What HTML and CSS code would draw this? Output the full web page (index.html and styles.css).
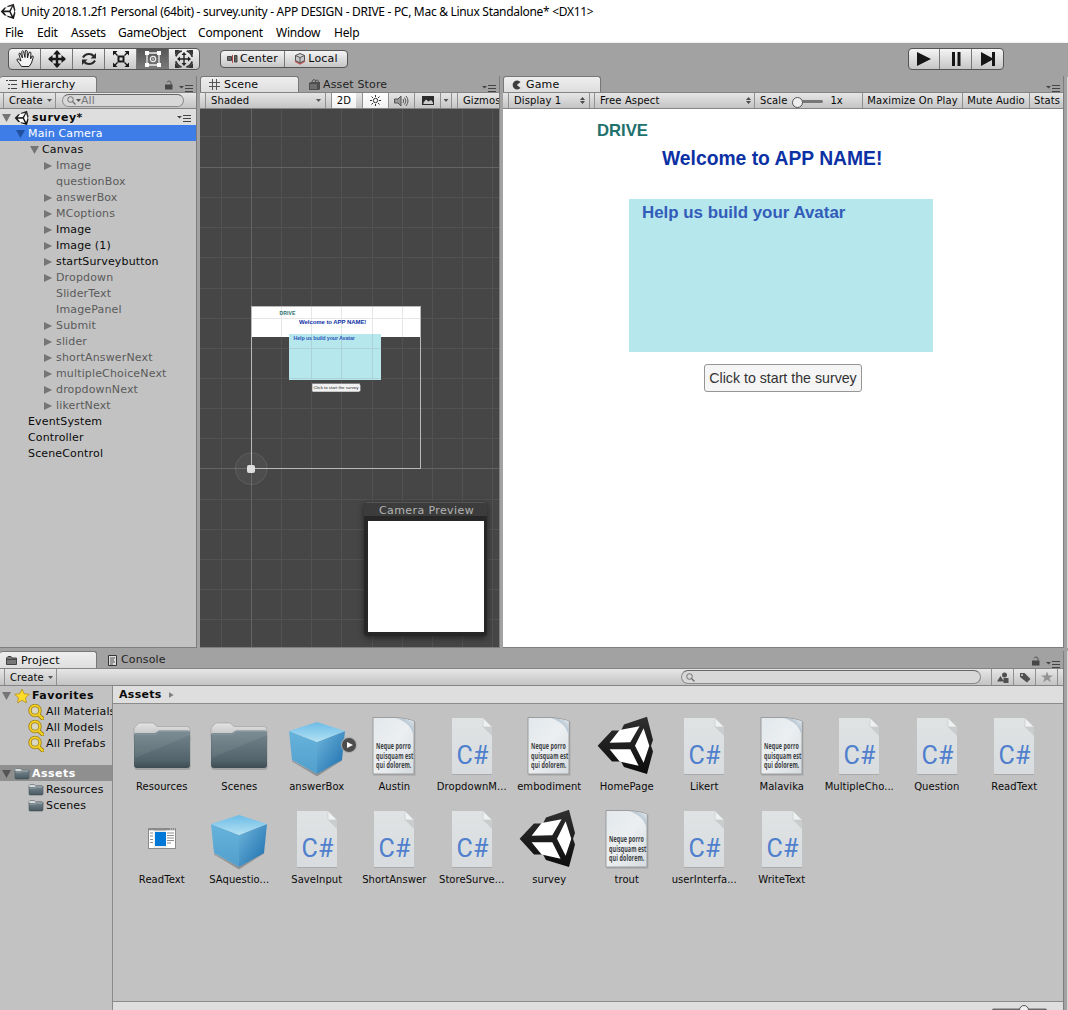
FILE: index.html
```html
<!DOCTYPE html>
<html lang="en">
<head>
<meta charset="utf-8">
<title>Unity 2018.1.2f1 Personal</title>
<link rel="stylesheet" href="styles.css">
</head>
<body>
<svg class="defs" width="0" height="0">
  <defs>
    <linearGradient id="gFolder" x1="0" y1="0" x2="0" y2="1"><stop offset="0" stop-color="#74858d"/><stop offset=".8" stop-color="#52636b"/><stop offset="1" stop-color="#3e4c53"/></linearGradient>
    <linearGradient id="gFlap" x1="0" y1="0" x2="0" y2="1"><stop offset="0" stop-color="#e4e4e4"/><stop offset="1" stop-color="#b4b4b4"/></linearGradient>
    <linearGradient id="gTop" x1="0" y1="0" x2="0" y2="1"><stop offset="0" stop-color="#6cbbe6"/><stop offset="1" stop-color="#b4e2f4"/></linearGradient>
    <linearGradient id="gLeft" x1="0" y1="0" x2="0" y2="1"><stop offset="0" stop-color="#66b3dc"/><stop offset="1" stop-color="#529fcd"/></linearGradient>
    <linearGradient id="gRight" x1="0" y1="0" x2="1" y2="1"><stop offset="0" stop-color="#6fb6dc"/><stop offset=".75" stop-color="#2f7eb8"/><stop offset="1" stop-color="#2a73ab"/></linearGradient>
    <linearGradient id="gDoc" x1="0" y1="0" x2="1" y2="1"><stop offset="0" stop-color="#e2e8ec"/><stop offset=".5" stop-color="#eceff1"/><stop offset="1" stop-color="#d5dbdf"/></linearGradient>
    <linearGradient id="gFold" x1="1" y1="0" x2="0" y2="1"><stop offset="0" stop-color="#e8edf0"/><stop offset=".5" stop-color="#a9bccb"/><stop offset="1" stop-color="#e6eaed"/></linearGradient>
    <linearGradient id="gCs" x1="0" y1="0" x2="0" y2="1"><stop offset="0" stop-color="#dfe3e4"/><stop offset="1" stop-color="#d8dcde"/></linearGradient>
    <linearGradient id="gUnity" x1="0" y1="0" x2="0" y2="1"><stop offset="0" stop-color="#303030"/><stop offset="1" stop-color="#0c0c0c"/></linearGradient>
    <symbol id="folder" viewBox="0 0 64 64">
      <rect x="4.500" y="20" width="56" height="36" rx="3" fill="#8f8f8f" opacity=".6"/>
      <path d="M4 27V15q0-2 2-3l3-3h14l4 3.500h30q3 0 3 3V27z" fill="url(#gFlap)" stroke="#9a9a9a" stroke-width=".6"/>
      <path d="M4 20.500q0-1.500 2-1.500h19l4-2.500h29q2 0 2 2V51q0 3-3 3H7q-3 0-3-3z" fill="url(#gFolder)"/>
      <path d="M5 44L60 21V18.500q0-1.500-2-1.500H29l-4 3H5z" fill="#fff" opacity=".07"/>
      <path d="M5 20h20.500l4-2.800H59" fill="none" stroke="#93a2a9" stroke-width=".8"/>
    </symbol>
    <symbol id="folder-small" viewBox="0 0 16 16">
      <path d="M1 6V3.500L2 2.500h4l1.500 1H14l1 1V6z" fill="#d8dcdd" stroke="#6f7a7e" stroke-width=".8"/>
      <path d="M1 5.500h6l1-.8h7V12q0 1-1 1H2q-1 0-1-1z" fill="url(#gFolder)" stroke="#4b585e" stroke-width=".6"/>
      <path d="M1.500 6h6l1-.8h6" fill="none" stroke="#aeb9bd" stroke-width=".7"/>
    </symbol>
    <symbol id="cube" viewBox="0 0 64 64">
      <path d="M7 47L32 62 57 46l-25 14z" fill="#888" stroke="#999" stroke-width="1"/>
      <path d="M4 17L32 28V60L7 46z" fill="url(#gLeft)"/>
      <path d="M60 17L32 28V60L57 46z" fill="url(#gRight)"/>
      <path d="M32 8L60 17 32 28 4 17z" fill="url(#gTop)"/>
    </symbol>
    <symbol id="cs" viewBox="0 0 64 64">
      <path d="M12 60.500h40" stroke="#aaa" stroke-width="1"/>
      <path d="M12 4H43l9 9V60H12z" fill="url(#gCs)"/>
      <path d="M43 13h9v9z" fill="#c9cdce"/>
      <path d="M43 4l9 9h-9z" fill="#eef0f1" stroke="#c9cdce" stroke-width=".7"/>
      <text x="32.500" y="49.800" text-anchor="middle" textLength="32" lengthAdjust="spacingAndGlyphs" font-family="Roboto, sans-serif" font-size="25" fill="#4f7fcd">C#</text>
    </symbol>
    <symbol id="doc" viewBox="0 0 64 64">
      <path d="M11 4H36L53 7V61H11z" fill="#888" opacity=".35" transform="translate(.5 .8)"/>
      <path d="M11 3.500H34Q44 4 52 7V60H11z" fill="url(#gDoc)" stroke="#8e8e8e" stroke-width=".8"/>
      <path d="M34 4Q44 4.500 51.500 7V21Q49 9 34 4z" fill="url(#gFold)"/>
      <g font-family="'Open Sans', sans-serif" font-weight="700" font-size="8.500" fill="#3b3d3f">
        <text x="14" y="35" textLength="35" lengthAdjust="spacingAndGlyphs">Neque porro</text>
        <text x="14" y="44.500" textLength="37.500" lengthAdjust="spacingAndGlyphs">quisquam est</text>
        <text x="14" y="54" textLength="35.500" lengthAdjust="spacingAndGlyphs">qui dolorem.</text>
      </g>
    </symbol>
    <symbol id="unity" viewBox="0 0 64 64">
      <path d="M2.600 31.700L17 16.500H26L29 10.500 52 2.700 58 26 56 31.700 58 37.500 52 60 29 53 26 47.500H17z" fill="url(#gUnity)"/>
      <path d="M14.600 28.700L24.600 16 44.600 12.200 35.300 28.200zM48.600 14.300L54.300 31.700 48.600 48.700 40 31.700zM14.600 35.200H35.300L43.600 51.700 24.600 47.500z" fill="#fff"/>
    </symbol>
    <symbol id="window" viewBox="0 0 64 64">
      <path d="M18 21h28v21H18z" fill="#8b8b8b"/><path d="M19 23.500h26V41H19z" fill="#eee"/><path d="M19 23.500h5V41h-5zM36 23.500h9V41h-9z" fill="#fff"/>
      <path d="M25 25h11v14H25z" fill="#0078d7"/>
      <path d="M20 26h3M20 29h3M20 32.500h3M20 35.500h3M37 26h7M37 28.500h7M37 31h7M37 33.500h7M37 36h4" stroke="#8c8c8c" stroke-width="1"/>
      <path d="M40 22h1m1 0h1m1 0h1" stroke="#ddd"/>
    </symbol>
    <symbol id="menu" viewBox="0 0 14 8"><path d="M0 2h5L2.500 4.500z" fill="#444"/><path d="M6 1.500h8M6 4.500h8M6 7.500h8" stroke="#444" stroke-width="1"/></symbol>
    <symbol id="lock" viewBox="0 0 8 10"><path d="M0 4.500h7.500v5H0z" fill="#464646"/><path d="M2 2.500Q2.500 1 4 1q2 0 2 2v2" fill="none" stroke="#555"/></symbol>
    <symbol id="mag" viewBox="0 0 16 16"><path d="M10 10l4.500 4.500" stroke="#9a8322" stroke-width="4" stroke-linecap="round"/><circle cx="7" cy="6.500" r="5" fill="#d9d6c4" stroke="#9a8322" stroke-width="3.400"/><circle cx="7" cy="6.500" r="5" fill="none" stroke="#f5ce22" stroke-width="1.800"/><path d="M10.500 10.500l4 4" stroke="#f5ce22" stroke-width="2.400" stroke-linecap="round"/></symbol>
    <symbol id="search" viewBox="0 0 9 9"><circle cx="3.500" cy="3.500" r="2.800" fill="none" stroke="#6d6d6d"/><path d="M5.500 5.500l3 3" stroke="#6d6d6d" stroke-width="1.200"/></symbol>
    <symbol id="updown" viewBox="0 0 5 7"><path d="M0 3l2.500-3L5 3zM0 4l2.500 3L5 4z" fill="#4a4a4a"/></symbol>
  </defs>
</svg>

<header class="titlebar">
  <svg class="logo" viewBox="0 0 64 64"><use href="#unity"/></svg>
  <span>Unity 2018.1.2f1 Personal (64bit) - survey.unity - APP DESIGN - DRIVE - PC, Mac &amp; Linux Standalone* &lt;DX11&gt;</span>
</header>
<nav class="menubar"><span>File</span><span>Edit</span><span>Assets</span><span>GameObject</span><span>Component</span><span>Window</span><span>Help</span></nav>

<div class="toolbar">
  <div class="group tools">
    <span><svg width="20" height="20" viewBox="0 0 20 20"><path d="M6.500 17.500Q5 15 2.500 12Q1 10 3 9.800L6 12 4 5.500Q3.800 4 5 4l2.500 5-.8-6.500Q7.500 1.200 8.500 2.300L10 8.500l.3-6.800Q11.300.8 12.200 2l.3 7L14 3.500q1.200-1 2 .2L15.500 10l1.500-3q1.300-.3 1.300 1L16.500 14 14 17.500z" fill="#f4f4f4" stroke="#222" stroke-width="1"/></svg></span>
    <span><svg width="18" height="18" viewBox="0 0 18 18"><path d="M9 1v16M1 9h16" stroke="#181818" stroke-width="2.400"/><path d="M9 0l4 4.500H5zM9 18l4-4.500H5zM0 9l4.500-4v8zM18 9l-4.500-4v8z" fill="#181818"/></svg></span>
    <span><svg width="16" height="16" viewBox="0 0 16 16"><path d="M2 6.500Q4 3 8 3q3 0 4.500 2M14 9.500Q12 13 8 13q-3 0-4.500-2" fill="none" stroke="#2a2a2a" stroke-width="2.200"/><path d="M15 2v5.500H9.500zM1 14V8.500h5.500z" fill="#2a2a2a"/></svg></span>
    <span><svg width="18" height="18" viewBox="0 0 18 18"><path d="M6.500 6.500h5v5h-5z" fill="none" stroke="#181818" stroke-width="2"/><path d="M2 2l3.500 3.500M16 2l-3.500 3.500M2 16l3.500-3.500M16 16l-3.500-3.500" stroke="#181818" stroke-width="1.400"/><path d="M1 1h4.500L1 5.500zM17 1v4.500L12.500 1zM1 17v-4.500L5.500 17zM17 17h-4.500l4.500-4.500z" fill="#181818"/></svg></span>
    <span class="on"><svg width="18" height="18" viewBox="0 0 18 18"><path d="M3 3h12v12H3z" fill="none" stroke="#f0f0f0" stroke-width="1.300"/><path d="M1 1h4v4H1zM13 1h4v4h-4zM1 13h4v4H1zM13 13h4v4h-4z" fill="#fff"/><circle cx="9" cy="9" r="2.700" fill="none" stroke="#eee" stroke-width="1.200"/><circle cx="9" cy="9" r=".8" fill="#fff"/></svg></span>
    <span><svg width="20" height="20" viewBox="0 0 20 20"><path d="M10 4.500v11M4.500 10h11" stroke="#222" stroke-width="1.400"/><path d="M10 3l2.500 3h-5zM10 17l2.500-3h-5zM3 10l3-2.500v5zM17 10l-3-2.500v5z" fill="#222"/><circle cx="10" cy="10" r="8.500" fill="none" stroke="#333" stroke-width="1.800" stroke-dasharray="8.350 5" stroke-dashoffset="-2.500"/><path d="M1 1h5L1 6zM19 1v5l-5-5zM1 19v-5l5 5zM19 19h-5l5-5z" fill="#333"/></svg></span>
  </div>
  <div class="group pivot">
    <span><svg width="11" height="8" viewBox="0 0 11 8"><path d="M.5 1.500h4v4h-4zM7.500.5h2.500v6.500H7.500z" fill="#666" stroke="#444"/><path d="M5.500 0v8" stroke="#b44"/></svg>Center</span>
    <span><svg width="12" height="12" viewBox="0 0 12 12"><path d="M1 8l5 3 5-3" fill="none" stroke="#c55" stroke-width="1.500"/><path d="M1.500 2.500L6 .5l4.500 2V7.500L6 10 1.500 7.500zM1.500 2.500L6 4.500l4.500-2M6 4.500V10" fill="#c8c8c8" stroke="#555"/></svg>Local</span>
  </div>
  <div class="group play">
    <span><svg width="16" height="14" viewBox="0 0 16 14"><path d="M1 0l14 7-14 7z" fill="#161616"/></svg></span>
    <span><svg width="12" height="14" viewBox="0 0 12 14"><path d="M2 0h3v14H2zM7.500 0h3v14h-3z" fill="#161616"/></svg></span>
    <span><svg width="16" height="14" viewBox="0 0 16 14"><path d="M1 0l11 6V0h3v14h-3V8L1 14z" fill="#161616"/></svg></span>
  </div>
</div>

<main class="upper">
  <section class="panel hierarchy">
    <div class="tabs">
      <span class="tab active"><svg width="11" height="9" viewBox="0 0 11 9"><path d="M0 .5h2M3 .5h8M2 4.500h2M5 4.500h6M2 8.500h2M5 8.500h6" stroke="#444"/></svg>Hierarchy</span>
      <i class="grow"></i><svg class="lock" width="8" height="10"><use href="#lock"/></svg><svg class="ctx" width="14" height="8"><use href="#menu"/></svg>
    </div>
    <div class="bar">
      <span class="btn create">Create<i class="dd"></i></span>
      <span class="field"><svg width="9" height="9"><use href="#search"/></svg><i class="dd"></i>All</span>
    </div>
    <div class="tree">
      <div class="row scene-row"><i class="open"></i><svg width="16" height="16"><use href="#unity"/></svg><b>survey*</b><i class="grow"></i><svg class="ctx" width="14" height="8"><use href="#menu"/></svg></div>
      <div class="row d1 selected"><i class="open"></i>Main Camera</div>
      <div class="row d2"><i class="open"></i>Canvas</div>
      <div class="row d3 off"><i class="shut"></i>Image</div>
      <div class="row d3 off"><i class="none"></i>questionBox</div>
      <div class="row d3 off"><i class="shut"></i>answerBox</div>
      <div class="row d3 off"><i class="shut"></i>MCoptions</div>
      <div class="row d3"><i class="shut"></i>Image</div>
      <div class="row d3"><i class="shut"></i>Image (1)</div>
      <div class="row d3"><i class="shut"></i>startSurveybutton</div>
      <div class="row d3 off"><i class="shut"></i>Dropdown</div>
      <div class="row d3 off"><i class="none"></i>SliderText</div>
      <div class="row d3 off"><i class="none"></i>ImagePanel</div>
      <div class="row d3 off"><i class="shut"></i>Submit</div>
      <div class="row d3 off"><i class="shut"></i>slider</div>
      <div class="row d3 off"><i class="shut"></i>shortAnswerNext</div>
      <div class="row d3 off"><i class="shut"></i>multipleChoiceNext</div>
      <div class="row d3 off"><i class="shut"></i>dropdownNext</div>
      <div class="row d3 off"><i class="shut"></i>likertNext</div>
      <div class="row d1"><i class="none"></i>EventSystem</div>
      <div class="row d1"><i class="none"></i>Controller</div>
      <div class="row d1"><i class="none"></i>SceneControl</div>
    </div>
  </section>

  <section class="panel scene">
    <div class="tabs">
      <span class="tab active"><svg width="11" height="11" viewBox="0 0 11 11"><path d="M3.500 0v11M7.500 0v11M0 3.500h11M0 7.500h11" stroke="#555"/></svg>Scene</span>
      <span class="tab store"><svg width="11" height="11" viewBox="0 0 11 11"><path d="M0 4l2-1h9v7l-1 1H0z" fill="#4d4d4d"/><path d="M3 3q.5-2.500 2-2.500T7 3M6 3q.5-2 2-2t1.500 2" fill="none" stroke="#555"/><path d="M1 5h7v5H1z" fill="#6e6e6e"/></svg>Asset Store</span>
      <i class="grow"></i><svg class="ctx" width="14" height="8"><use href="#menu"/></svg>
    </div>
    <div class="bar">
      <span class="btn shaded">Shaded<i class="grow"></i><i class="dd"></i></span>
      <span class="btn twod lit">2D</span>
      <span class="btn sun lit"><svg width="13" height="13" viewBox="0 0 13 13"><circle cx="6.500" cy="6.500" r="2.200" fill="none" stroke="#333"/><path d="M6.500 1v2M6.500 10v2M1 6.500h2M10 6.500h2M2.500 2.500L4 4M9 9l1.500 1.500M10.500 2.500L9 4M4 9l-1.500 1.500" stroke="#333"/></svg></span>
      <span class="btn snd"><svg width="15" height="12" viewBox="0 0 15 12"><path d="M.5 4H4l3-3v10L4 8H.5z" fill="#999" stroke="#555"/><path d="M9 4q1.500 2 0 4M10.500 2.500q3 3.500 0 7M12 1q4 5 0 10" fill="none" stroke="#555"/></svg></span>
      <span class="btn fx"><svg width="12" height="9" viewBox="0 0 12 9"><path d="M0 0h12v9H0z" fill="#2c2c2c"/><path d="M1.500 6.500L4 3.500l2.500 2L9 4l2 2.500V8H1.500z" fill="#ccc"/></svg></span>
      <span class="btn fxdd"><i class="dd"></i></span>
      <span class="btn giz">Gizmos</span>
    </div>
    <div class="viewport">
      <svg class="canvas" width="299" height="538" viewBox="200 109 299 538" shape-rendering="crispEdges">
        <path d="M221.500 109v538M281.500 109v538M311.500 109v538M341.500 109v538M372.500 109v538M402.500 109v538M432.500 109v538M462.500 109v538M492.500 109v538M200 136.500h299M200 197.500h299M200 227.500h299M200 257.500h299M200 288.500h299M200 318.500h299M200 348.500h299M200 378.500h299M200 408.500h299M200 438.500h299M200 499.500h299M200 529.500h299M200 559.500h299M200 589.500h299M200 619.500h299" stroke="#525252"/>
        <path d="M251.500 109v538M200 167.500h299M200 468.500h299" stroke="#646464"/>
        <path d="M251 307h170v30H251z" fill="#fff"/>
        <path d="M289 334h92v46H289z" fill="#b5e7ed"/>
        <path d="M251 318.500h169M281.500 307v30M311.500 307v73M341.500 307v73M372.500 307v73M402.500 307v30M289 348.500h92M289 378.500h92" stroke="#808080" stroke-opacity=".2"/>
        <path d="M251.500 306.500h169v162h-169z" fill="none" stroke="#b9b9b9"/>
        <rect x="312" y="383.500" width="48" height="8" rx="1" fill="#f1f1f1" stroke="#aaa" stroke-width=".6"/>
        <g font-family="'Liberation Sans', Arial, sans-serif" font-weight="700">
          <text x="279.500" y="315" font-size="5" textLength="16" fill="#1f6f6b">DRIVE</text>
          <text x="299" y="323.500" font-size="6" textLength="67.500" fill="#0d32a5">Welcome to APP NAME!</text>
          <text x="293.500" y="340" font-size="5.400" textLength="61.500" fill="#2f5bbb">Help us build your Avatar</text>
          <text x="313.500" y="389.300" font-size="4.300" font-weight="400" textLength="45" fill="#222">Click to start the survey</text>
        </g>
        <g shape-rendering="auto"><circle cx="251.300" cy="468.700" r="16" fill="#fff" fill-opacity=".04" stroke="#fff" stroke-opacity=".1"/><rect x="247" y="465" width="8" height="8" rx="2" fill="#dedede"/></g>
      </svg>
      <div class="preview"><div class="preview-title">Camera Preview</div><div class="preview-body"></div></div>
    </div>
  </section>

  <section class="panel game">
    <div class="tabs">
      <span class="tab active"><svg width="10" height="10" viewBox="0 0 10 10"><path d="M8.500 2A4.500 4.500 0 1 0 8.500 8L4.800 5z" fill="#3d3d3d"/></svg>Game</span>
      <i class="grow"></i><svg class="ctx" width="14" height="8"><use href="#menu"/></svg>
    </div>
    <div class="bar">
      <span class="btn display">Display 1<i class="grow"></i><svg width="5" height="7"><use href="#updown"/></svg></span>
      <span class="btn aspect">Free Aspect<i class="grow"></i><svg width="5" height="7"><use href="#updown"/></svg></span>
      <span class="btn scale">Scale<i class="slider"></i>1x</span>
      <span class="btn max">Maximize On Play</span>
      <span class="btn mute">Mute Audio</span>
      <span class="btn stats">Stats</span>
    </div>
    <div class="gameview">
      <div class="drive">DRIVE</div>
      <div class="welcome">Welcome to APP NAME!</div>
      <div class="avatar">Help us build your Avatar</div>
      <div class="start">Click to start the survey</div>
    </div>
  </section>
  <aside class="sliver"></aside>
</main>

<section class="lower">
  <div class="tabs">
    <span class="tab active"><svg width="11" height="9" viewBox="0 0 11 9"><path d="M.5 8.500V2L2 .5h3L6 2h4.500v6.500z" fill="#777" stroke="#444"/><path d="M1 3.500h9" stroke="#444"/></svg>Project</span>
    <span class="tab console"><svg width="9" height="11" viewBox="0 0 9 11"><path d="M.5.5h8v10h-8z" fill="#ddd" stroke="#333"/><path d="M2 3h5M2 5h4M2 7h5M2 9h3" stroke="#444" stroke-width=".9"/></svg>Console</span>
    <i class="grow"></i><svg class="lock" width="8" height="10"><use href="#lock"/></svg><svg class="ctx" width="14" height="8"><use href="#menu"/></svg>
  </div>
  <div class="bar">
    <span class="btn create">Create<i class="dd"></i></span>
    <i class="grow"></i>
    <span class="field wide"><svg width="9" height="9"><use href="#search"/></svg></span>
    <span class="btn filt"><svg width="12" height="11" viewBox="0 0 12 11"><circle cx="7.500" cy="3" r="2.500" fill="#505050"/><path d="M0 9.500L3.500 4 7 9.500zM6.500 6h5v5h-5z" fill="#505050"/></svg></span>
    <span class="btn filt"><svg width="12" height="11" viewBox="0 0 12 11"><path d="M1 1h4.500L11.500 7 8 10.500 1 5z" fill="#505050"/><circle cx="3" cy="3" r="1" fill="#ccc"/></svg></span>
    <span class="btn filt"><svg width="12" height="12" viewBox="0 0 12 12"><path d="M6 .5l1.500 4H12L8.500 7l1.300 4.300L6 8.700l-3.800 2.600L3.500 7 0 4.500h4.500z" fill="#949494"/></svg></span>
    <span class="btn endcap"></span>
  </div>
  <div class="project">
    <div class="side">
      <div class="row"><i class="open"></i><svg width="16" height="16" viewBox="0 0 16 16"><path d="M8 1l2.200 4.700 5.100.6-3.800 3.500 1 5L8 12.300l-4.500 2.500 1-5L.7 6.300l5.100-.6z" fill="#ffdb2a" stroke="#b48e1b" stroke-width=".8"/></svg><b>Favorites</b></div>
      <div class="row sub"><svg width="16" height="16"><use href="#mag"/></svg>All Materials</div>
      <div class="row sub"><svg width="16" height="16"><use href="#mag"/></svg>All Models</div>
      <div class="row sub"><svg width="16" height="16"><use href="#mag"/></svg>All Prefabs</div>
      <div class="row chosen"><i class="open"></i><svg width="16" height="16"><use href="#folder-small"/></svg><b>Assets</b></div>
      <div class="row sub"><svg width="16" height="16"><use href="#folder-small"/></svg>Resources</div>
      <div class="row sub"><svg width="16" height="16"><use href="#folder-small"/></svg>Scenes</div>
    </div>
    <div class="browser">
      <div class="crumb"><b>Assets</b><i class="next"></i></div>
      <div class="assets">
        <figure><svg><use href="#folder"/></svg><figcaption>Resources</figcaption></figure>
        <figure><svg><use href="#folder"/></svg><figcaption>Scenes</figcaption></figure>
        <figure class="prefab"><svg><use href="#cube"/></svg><span class="badge"></span><figcaption>answerBox</figcaption></figure>
        <figure><svg><use href="#doc"/></svg><figcaption>Austin</figcaption></figure>
        <figure><svg><use href="#cs"/></svg><figcaption>DropdownM...</figcaption></figure>
        <figure><svg><use href="#doc"/></svg><figcaption>embodiment</figcaption></figure>
        <figure><svg><use href="#unity"/></svg><figcaption>HomePage</figcaption></figure>
        <figure><svg><use href="#cs"/></svg><figcaption>Likert</figcaption></figure>
        <figure><svg><use href="#doc"/></svg><figcaption>Malavika</figcaption></figure>
        <figure><svg><use href="#cs"/></svg><figcaption>MultipleCho...</figcaption></figure>
        <figure><svg><use href="#cs"/></svg><figcaption>Question</figcaption></figure>
        <figure><svg><use href="#cs"/></svg><figcaption>ReadText</figcaption></figure>
        <figure><svg><use href="#window"/></svg><figcaption>ReadText</figcaption></figure>
        <figure><svg><use href="#cube"/></svg><figcaption>SAquestio...</figcaption></figure>
        <figure><svg><use href="#cs"/></svg><figcaption>SaveInput</figcaption></figure>
        <figure><svg><use href="#cs"/></svg><figcaption>ShortAnswer</figcaption></figure>
        <figure><svg><use href="#cs"/></svg><figcaption>StoreSurve...</figcaption></figure>
        <figure><svg><use href="#unity"/></svg><figcaption>survey</figcaption></figure>
        <figure><svg><use href="#doc"/></svg><figcaption>trout</figcaption></figure>
        <figure><svg><use href="#cs"/></svg><figcaption>userInterfa...</figcaption></figure>
        <figure><svg><use href="#cs"/></svg><figcaption>WriteText</figcaption></figure>
      </div>
      <div class="foot"><svg width="56" height="10" viewBox="0 0 56 10"><rect x="0" y="6.500" width="55" height="3" rx="1.500" fill="#6a6a6a"/><circle cx="32" cy="8" r="4.500" fill="#f0f0f0" stroke="#555"/></svg></div>
    </div>
  </div>
</section>
</body>
</html>
```
FILE: styles.css
```css
* { box-sizing: border-box; }
body {
  margin: 0; width: 1068px; height: 1010px; overflow: hidden;
  display: flex; flex-direction: column;
  background: #a2a2a2; color: #0a0a0a;
  font: 11px/16px "DejaVu Sans", Verdana, sans-serif; letter-spacing: .15px;
  white-space: nowrap;
}
i { font-style: normal; }
svg { display: block; flex: none; }
.defs { position: absolute; }
.grow { flex: 1; }

.titlebar, .menubar { background: #fff; color: #000; font: 12px/22px "Noto Sans", "Open Sans", sans-serif; letter-spacing: -.2px; }
.titlebar { display: flex; align-items: center; height: 23px; flex: none; letter-spacing: -.3px; }
.logo { width: 17px; height: 17px; margin: 0 4px 0 0; }
.menubar { display: grid; grid-template-columns: 32px 34px 47px 80px 78px 58px 40px; height: 20px; flex: none; padding-left: 5px; line-height: 20px; border-bottom: 1px solid #f0f0f0; }

.toolbar { display: flex; height: 33px; flex: none; padding: 5px 64px 0 8px; align-items: flex-start; }
.group { display: flex; border: 1px solid #555; border-radius: 4px; background: linear-gradient(#f4f4f4, #c6c6c6); overflow: hidden; }
.group span { display: flex; align-items: center; justify-content: center; border-left: 1px solid #777; }
.group span:first-child { border-left: 0; }
.tools { height: 22px; }
.tools span { width: 32px; }
.tools span:first-child { width: 31px; }
.tools span:last-child { width: 31px; }
.tools .on { background: linear-gradient(#555, #7a7a7a); }
.pivot { margin: 2px 0 0 20px; height: 18px; }
.pivot span { width: 63px; gap: 2px; }
.play { margin-left: auto; height: 22px; }
.play span { width: 32px; }
.play span:first-child { width: 30px; }

.upper { display: grid; grid-template-columns: 197px 300px 561px 1px; column-gap: 3px; height: 572px; flex: none; }
.sliver { background: #d8d8d8; margin-top: 1px; }
.panel { display: flex; flex-direction: column; overflow: hidden; border-right: 1px solid #7e7e7e; border-bottom: 1px solid #7e7e7e; }
.tabs { display: flex; height: 16px; flex: none; align-items: flex-end; }
.tab { display: flex; align-items: center; height: 16px; padding-left: 8px; gap: 4px; color: #222; }
.tab.active { background: linear-gradient(#eee, #dedede); border: 1px solid #777; border-width: 1px 1px 0 0; border-radius: 3px 3px 0 0; color: #0a0a0a; }
.hierarchy .tab { width: 97px; padding-left: 6px; }
.scene .tab.active { width: 99px; border-left-width: 1px; }
.scene .store { padding-left: 10px; gap: 3px; padding-top: 1px; }
.game .tab { width: 98px; border-left-width: 1px; gap: 4px; padding-left: 8px; }
.tabs .lock { margin: 0 6px 2px 0; }
.tabs .ctx { margin: 0 3px 0 0; }
.bar { display: flex; height: 17px; flex: none; align-items: center; border-top: 1px solid #848484; border-bottom: 1px solid #848484; background: linear-gradient(#e6e6e6, #c4c4c4); overflow: hidden; font-size: 10px; letter-spacing: .1px; }
.btn { display: flex; align-items: center; height: 100%; flex: none; border-left: 1px solid #909090; }
.dd { width: 5px; height: 3px; background: #555; clip-path: polygon(0 0, 100% 0, 50% 100%); }
.create { margin-left: 3px; width: 53px; padding: 0 3px 0 5px; justify-content: space-between; border-right: 1px solid #909090; }
.field { display: flex; align-items: center; height: 13px; width: 122px; margin-left: 6px; padding-left: 4px; border: 1px solid #8a8a8a; border-top-color: #666; border-radius: 7px; background: #d8d8d8; color: #777; font-size: 11px; }

.tree { flex: 1; background: #c2c2c2; }
.row { display: flex; align-items: center; height: 16px; padding: 2px 0 0 2px; }
.row .open, .row .shut, .row .none { width: 9px; height: 8px; margin-right: 3px; flex: none; }
.open { background: #757575; clip-path: polygon(0 0, 100% 0, 50% 100%); }
.shut { background: #757575; clip-path: polygon(0 0, 90% 50%, 0 100%); }
.row b { letter-spacing: .5px; }
.d1 { padding-left: 16px; }
.d2 { padding-left: 30px; }
.d3 { padding-left: 44px; }
.off { color: #5a5a5a; }
.selected { background: #3e7de7; color: #fff; }
.selected .open { background: #20509f; }
.scene-row { background: #dedede; padding-right: 5px; }
.scene-row b { margin-left: 2px; }

.shaded { margin-left: 5px; width: 121px; padding: 0 4px 0 5px; border-right: 1px solid #909090; }
.lit { background: linear-gradient(#fff, #f1f1f1); }
.twod { margin-left: 5px; width: 25px; justify-content: center; }
.sun { margin-left: 6px; width: 26px; justify-content: center; }
.snd { width: 26px; justify-content: center; }
.fx { width: 26px; justify-content: center; }
.fxdd { width: 12px; justify-content: center; border-right: 1px solid #909090; }
.giz { margin-left: 5px; padding-left: 5px; }
.viewport { position: relative; flex: 1; background: #464646; overflow: hidden; }
.preview { position: absolute; left: 164px; top: 393px; width: 123px; height: 134px; border-radius: 4px; background: #272727; box-shadow: 0 2px 6px rgba(0,0,0,.5); overflow: hidden; }
.preview-title { height: 14px; background: #3c3c3c; border-top: 1px solid #555; color: #b4b4b4; text-align: center; line-height: 15px; letter-spacing: .4px; padding-left: 2px; }
.preview-body { height: 111px; margin: 5px 3px 0 4px; background: #fff; }

.display { margin-left: 5px; width: 82px; padding: 0 4px 0 5px; border-right: 1px solid #909090; }
.aspect { margin-left: 4px; width: 160px; padding: 0 3px 0 5px; }
.scale { width: 108px; padding-left: 5px; }
.slider { position: relative; width: 27px; height: 3px; margin: 2px 7px 0 9px; background: #777; border-radius: 2px; }
.slider::before { content: ""; position: absolute; left: -4px; top: -3px; width: 9px; height: 9px; border: 1px solid #555; border-radius: 50%; background: #eee; }
.max { width: 100px; justify-content: center; }
.mute { width: 67px; justify-content: center; }
.stats { flex: 1; padding-left: 4px; }
.gameview { flex: 1; background: #fff; font-family: "Liberation Sans", Arial, sans-serif; font-weight: 700; letter-spacing: 0; }
.drive { margin: 12px 0 0 94px; height: 20px; font-size: 16.7px; line-height: 20px; color: #20706c; }
.welcome { margin: 6px 0 0 159px; height: 24px; font-size: 19.3px; line-height: 24px; color: #0b31a5; }
.avatar { margin: 28px 0 0 126px; width: 304px; height: 153px; padding: 4px 0 0 13px; background: #b5e7ed; font-size: 16.9px; line-height: 20px; color: #335cb9; }
.start { margin: 12px 0 0 201px; width: 158px; height: 28px; border: 1px solid #969696; border-radius: 3px; background: #f5f5f5; color: #323232; font-size: 14.2px; font-weight: 400; line-height: 27px; text-align: center; }

.lower { display: flex; flex-direction: column; flex: 1; min-height: 0; width: 1064px; margin-top: 3px; border-right: 1px solid #7e7e7e; box-shadow: 3px 0 0 #a2a2a2, 4px 0 0 #d8d8d8; }
.lower .tabs { height: 17px; }
.lower .tab { height: 17px; padding-left: 6px; padding-top: 1px; }
.lower .tab.active { width: 97px; }
.lower .console { padding-left: 11px; }
.lower .bar { height: 18px; }
.lower .create { margin-left: 4px; padding-top: 1px; }
.field.wide { width: 300px; height: 14px; margin-right: 10px; }
.filt { width: 22px; justify-content: center; }
.endcap { width: 6px; }
.project { display: flex; flex: 1; min-height: 0; }
.side { width: 113px; flex: none; padding-top: 1px; border-right: 1px solid #8a8a8a; background: #c2c2c2; overflow: hidden; }
.side .row svg { margin: -1px 2px 0 0; }
.side .sub { padding-left: 28px; }
.side .chosen { margin-top: 14px; background: #8f8f8f; color: #fff; }
.chosen .open { background: #555; }
.browser { display: flex; flex-direction: column; flex: 1; background: #c2c2c2; }
.crumb { display: flex; align-items: center; height: 18px; flex: none; padding: 1px 0 0 6px; gap: 7px; background: #dedede; border-bottom: 1px solid #8c8c8c; letter-spacing: .3px; }
.next { width: 5px; height: 6px; background: #808080; clip-path: polygon(0 0, 100% 50%, 0 100%); }
.assets { display: grid; grid-template-columns: repeat(12, 77.5px); grid-auto-rows: 93px; align-content: start; flex: 1; padding: 10px 0 0 10px; }
.assets figure { position: relative; margin: 0; display: flex; flex-direction: column; align-items: center; }
.assets svg { width: 64px; height: 64px; }
.assets figcaption { font-size: 10px; line-height: 18px; letter-spacing: .05px; }
.badge { position: absolute; left: 64px; top: 24px; width: 14px; height: 14px; border-radius: 50%; background: #4d4d4d; box-shadow: 0 0 1px 1px #aaa; }
.badge::after { content: ""; position: absolute; left: 5px; top: 4px; width: 6px; height: 6px; background: #fff; clip-path: polygon(0 0, 100% 50%, 0 100%); }
.foot { height: 9px; flex: none; display: flex; justify-content: flex-end; background: #dedede; border-top: 1px solid #8c8c8c; padding-right: 15px; overflow: hidden; }
```
